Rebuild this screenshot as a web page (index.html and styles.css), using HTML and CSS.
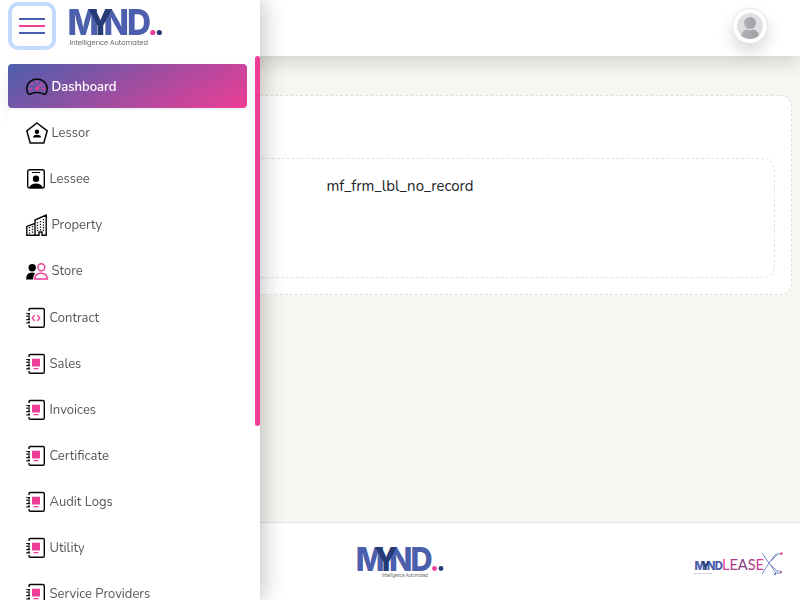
FILE: index.html
```html
<!DOCTYPE html>
<html lang="en">
<head>
<meta charset="utf-8">
<title>Mynd LeaseX</title>
<link rel="stylesheet" href="styles.css">
</head>
<body>
<svg class="defs" width="0" height="0">
  <symbol id="book" viewBox="0 0 20 22">
    <path d="M3 4V2.8Q3 1.5 4.3 1.5H17Q18.3 1.5 18.3 2.8V19Q18.3 20.3 17 20.3H4.3Q3 20.3 3 19V18M3 6.5V8M3 10.3V12M3 14.3V16" fill="none" stroke="#080808" stroke-width="1.4"/>
    <path d="M.3 6.5H4M.3 9.2H4M.3 12.6H4M.3 15.8H4" stroke="#080808" stroke-width="1.2"/>
  </symbol>
  <symbol id="journal" viewBox="0 0 20 22">
    <use href="#book" width="20" height="22"/>
    <path d="M6 5.8H14V13.6H6ZM7.6 15H12.4V16.2H7.6Z" fill="#ee3d96"/>
  </symbol>
</svg>

<header class="topbar">
  <div class="avatar">
    <svg width="26" height="26" viewBox="0 0 26 26">
      <defs><linearGradient id="person" x1="0" x2="1"><stop stop-color="#b0b1b5"/><stop offset="1" stop-color="#9fa1a5"/></linearGradient>
      <clipPath id="round"><circle cx="13" cy="13" r="13"/></clipPath></defs>
      <g clip-path="url(#round)"><path fill="#dfe0e2" d="M0 0h26v26H0z"/><circle cx="13" cy="10" r="6" fill="url(#person)"/><path d="M4 26V22Q6 16.5 10 16.5Q13 18 16 16.5Q20 16.5 22 22V26Z" fill="url(#person)"/></g>
    </svg>
  </div>
</header>

<main class="content">
  <section class="panel">
    <div class="record">mf_frm_lbl_no_record</div>
  </section>
</main>

<footer class="footer">
  <svg class="footer-mynd" width="88" height="36" viewBox="0 0 88 36">
    <text class="wordmark" transform="translate(1.5 26) scale(.85 .92)"><tspan x="-2">M</tspan><tspan x="37">N</tspan><tspan x="62.5">D</tspan><tspan class="navy" x="20">Y</tspan></text>
    <circle cx="78.5" cy="23.5" r="2.4" fill="#ee3d96"/>
    <circle cx="85" cy="23.5" r="2.4" fill="#263b75"/>
    <text class="tagline" x="26" y="31.5" font-size="5" textLength="46" lengthAdjust="spacingAndGlyphs">Intelligence Automated</text>
  </svg>
  <svg class="lease" width="90" height="26" viewBox="0 0 90 26">
    <defs><linearGradient id="lease-fill"><stop stop-color="#ee3d96"/><stop offset=".5" stop-color="#75387c"/><stop offset="1" stop-color="#ee3d96"/></linearGradient></defs>
    <text class="wordmark" transform="translate(1 19) scale(.315 .34)"><tspan x="-2">M</tspan><tspan x="37">N</tspan><tspan x="62.5">D</tspan><tspan class="navy" x="20">Y</tspan></text>
    <text x="28" y="19" font-family="Lato" font-size="16" fill="url(#lease-fill)" textLength="42" lengthAdjust="spacingAndGlyphs">LEASE</text>
    <path d="M0 22.5H18" stroke="#9ba0b5" stroke-width=".6" stroke-dasharray="2 .6"/>
    <path d="M68 2L75 12L82 22H87M68 23L75 12L82 3H87M77 14L83 20H86M77 10L83 4" fill="none" stroke="#5268ae" stroke-width=".8"/>
    <circle cx="87.5" cy="2.5" r="1.2" fill="#ee3d96"/><circle cx="87" cy="21" r="1" fill="#b43c91"/><circle cx="81" cy="23" r="1" fill="#5268ae"/>
  </svg>
</footer>

<aside class="sidebar">
  <div class="brand">
    <button class="toggle" aria-label="Menu"><i></i><i></i><i></i></button>
    <svg class="logo" width="96" height="42" viewBox="0 0 96 42">
      <text class="wordmark" transform="translate(1.3 28) scale(.925 1)"><tspan x="-2">M</tspan><tspan x="37">N</tspan><tspan x="62.5">D</tspan><tspan class="navy" x="20">Y</tspan></text>
      <circle cx="84.8" cy="25.5" r="2.6" fill="#ee3d96"/>
      <circle cx="91.3" cy="25.5" r="2.6" fill="#263b75"/>
      <text class="tagline" x="1.5" y="38" font-size="7" textLength="78.5" lengthAdjust="spacingAndGlyphs">Intelligence Automated</text>
    </svg>
  </div>
  <nav class="menu">
    <a class="item active"><svg width="22" height="22" viewBox="0 0 22 22"><path d="M2.4 18Q.8 16 .8 12.5A10.2 9.6 0 0 1 21.2 12.5Q21.2 16 19.6 18Q18 18.8 16 17.4Q11 15.6 6 17.4Q4 18.8 2.4 18Z" fill="none" stroke="#080808" stroke-width="1.5"/><path d="M11 4.8V7M5.3 7L7 8.5M3.2 12.7H5.6M16.4 12.7H19M10.3 13.2L16.3 7.5" fill="none" stroke="#ee3d96" stroke-width="1.4"/><circle cx="11" cy="12.7" r="1.7" fill="#ee3d96"/></svg><span>Dashboard</span></a>
    <a class="item"><svg width="22" height="22" viewBox="0 0 22 22"><path d="M11 1L21.2 8.8L17.8 21H4.2L.8 8.8Z" fill="none" stroke="#080808" stroke-width="1.5"/><circle cx="11" cy="9.8" r="2.2"/><path d="M7 15.5Q7 12.8 11 12.8Q15 12.8 15 15.5Z"/></svg><span>Lessor</span></a>
    <a class="item"><svg width="20" height="22" viewBox="0 0 20 22"><rect x="1.7" y="1.7" width="16.6" height="18.3" rx="2" fill="none" stroke="#080808" stroke-width="1.4"/><path d="M6 4.5H14" stroke="#080808"/><circle cx="10" cy="10.8" r="3.2"/><path d="M3 20Q4.5 15.5 10 15.5Q15.5 15.5 17 20Z"/></svg><span>Lessee</span></a>
    <a class="item"><svg width="22" height="22" viewBox="0 0 22 22"><path d="M.8 21.2V12.4L9 9.5V6L20.2 1V21.2H16V18H13V21.2ZM9 9V21" fill="none" stroke="#080808" stroke-width="1.4"/><path d="M11.5 8V17M14.5 7V17M17.5 5V17M3.5 13V20M6.5 12V20" fill="none" stroke="#080808" stroke-width="1.3" stroke-dasharray="1.3 1.4"/></svg><span>Property</span></a>
    <a class="item"><svg width="22" height="22" viewBox="0 0 22 22"><circle cx="6.2" cy="7.7" r="3.7"/><path d="M0 19.5Q0 12.5 6 12.5Q8 12.5 9 13Q7 16 7 19.5Z"/><g fill="none" stroke="#ee3d96" stroke-width="1.4"><circle cx="15.3" cy="7.3" r="3.5"/><path d="M8.7 19Q9 13.3 15 13.3Q21 13.3 21.3 19Z"/></g></svg><span>Store</span></a>
    <a class="item"><svg width="20" height="22" viewBox="0 0 20 22"><use href="#book" width="20" height="22"/><path d="M8.8 8L6.2 11L8.8 14M11.2 8L13.8 11L11.2 14" fill="none" stroke="#ee3d96" stroke-width="1.3"/></svg><span>Contract</span></a>
    <a class="item"><svg width="20" height="22"><use href="#journal" width="20" height="22"/></svg><span>Sales</span></a>
    <a class="item"><svg width="20" height="22"><use href="#journal" width="20" height="22"/></svg><span>Invoices</span></a>
    <a class="item"><svg width="20" height="22"><use href="#journal" width="20" height="22"/></svg><span>Certificate</span></a>
    <a class="item"><svg width="20" height="22"><use href="#journal" width="20" height="22"/></svg><span>Audit Logs</span></a>
    <a class="item"><svg width="20" height="22"><use href="#journal" width="20" height="22"/></svg><span>Utility</span></a>
    <a class="item"><svg width="20" height="22"><use href="#journal" width="20" height="22"/></svg><span>Service Providers</span></a>
  </nav>
  <div class="scrollbar"></div>
</aside>
</body>
</html>
```
FILE: styles.css
```css
* { box-sizing: border-box; }
body {
  margin: 0;
  height: 600px;
  overflow: hidden;
  display: flex;
  flex-direction: column;
  background: #f7f6f2;
  font-family: Nunito, "Open Sans", sans-serif;
  color: #212529;
}
.defs { position: absolute; }
.wordmark { font: 800 36px Inter, sans-serif; fill: #4b5fac; }
.navy { fill: #263b75; }
.tagline { font-family: Poppins, Nunito, sans-serif; fill: #666; }
.topbar {
  flex: 0 0 56px;
  display: flex;
  justify-content: flex-end;
  padding: 8px 32px 0 0;
  background: #fff;
  box-shadow: 0 8px 16px rgba(0, 0, 0, .13);
}
.avatar {
  width: 36px;
  height: 36px;
  padding: 4px;
  border: 1px solid #e2e5ec;
  border-radius: 50%;
  background: #fff;
  box-shadow: 0 8px 16px rgba(0, 0, 0, .15);
}
.avatar svg { display: block; }
.content { flex: 1; padding: 39px 8px 0; }
.panel {
  height: 200px;
  padding: 62px 16px 16px;
  border: 1px dashed #e2dfdb;
  border-radius: 12px;
  background: #fff;
}
.record {
  height: 120px;
  padding-top: 17px;
  border: 1px dashed #e2e2e2;
  border-radius: 12px;
  text-align: center;
  font-size: 15px;
  line-height: 20px;
}
.footer {
  flex: 0 0 78px;
  display: grid;
  grid-template-columns: 1fr 88px 1fr;
  padding: 22px 16px 0 16px;
  border-top: 1px solid #e8e3de;
  background: #fff;
}
.footer-mynd { grid-column: 2; overflow: visible; }
.lease { grid-column: 3; justify-self: end; margin-top: 6px; overflow: visible; }
.sidebar {
  position: fixed;
  inset: 0 auto 0 0;
  width: 260px;
  overflow: hidden;
  background: #fff;
  box-shadow: 0 0 24px rgba(0, 0, 0, .3);
}
.brand { display: flex; gap: 12px; height: 64px; padding: 2px 0 0 8px; }
.toggle {
  width: 48px;
  height: 48px;
  display: flex;
  flex-direction: column;
  align-items: center;
  justify-content: center;
  gap: 5px;
  padding: 0;
  border: 4px solid #c2dbfe;
  border-radius: 10px;
  background: #fff;
}
.toggle i { width: 26px; height: 2px; background: #4b5fac; }
.toggle i:nth-child(2) { background: #ee3d96; }
.logo { margin-top: 5px; overflow: visible; }
.menu { display: flex; flex-direction: column; gap: 2.12px; padding: 0 13px 0 8px; }
.item {
  flex: 0 0 44px;
  display: flex;
  align-items: center;
  gap: 3.5px;
  padding: 2px 0 0 18px;
  border-radius: 4px;
  background: #fff;
  color: #55575a;
  font-size: 13px;
}
.item.active {
  color: #fff;
  font-weight: 600;
  background: linear-gradient(150deg, #4b5fac, #ee3d96);
  box-shadow: 0 8px 16px rgba(40, 50, 100, .08);
}
.scrollbar {
  position: absolute;
  top: 56px;
  right: 0;
  width: 5px;
  height: 370px;
  border-radius: 3px;
  background: #ee3d96;
}
```
